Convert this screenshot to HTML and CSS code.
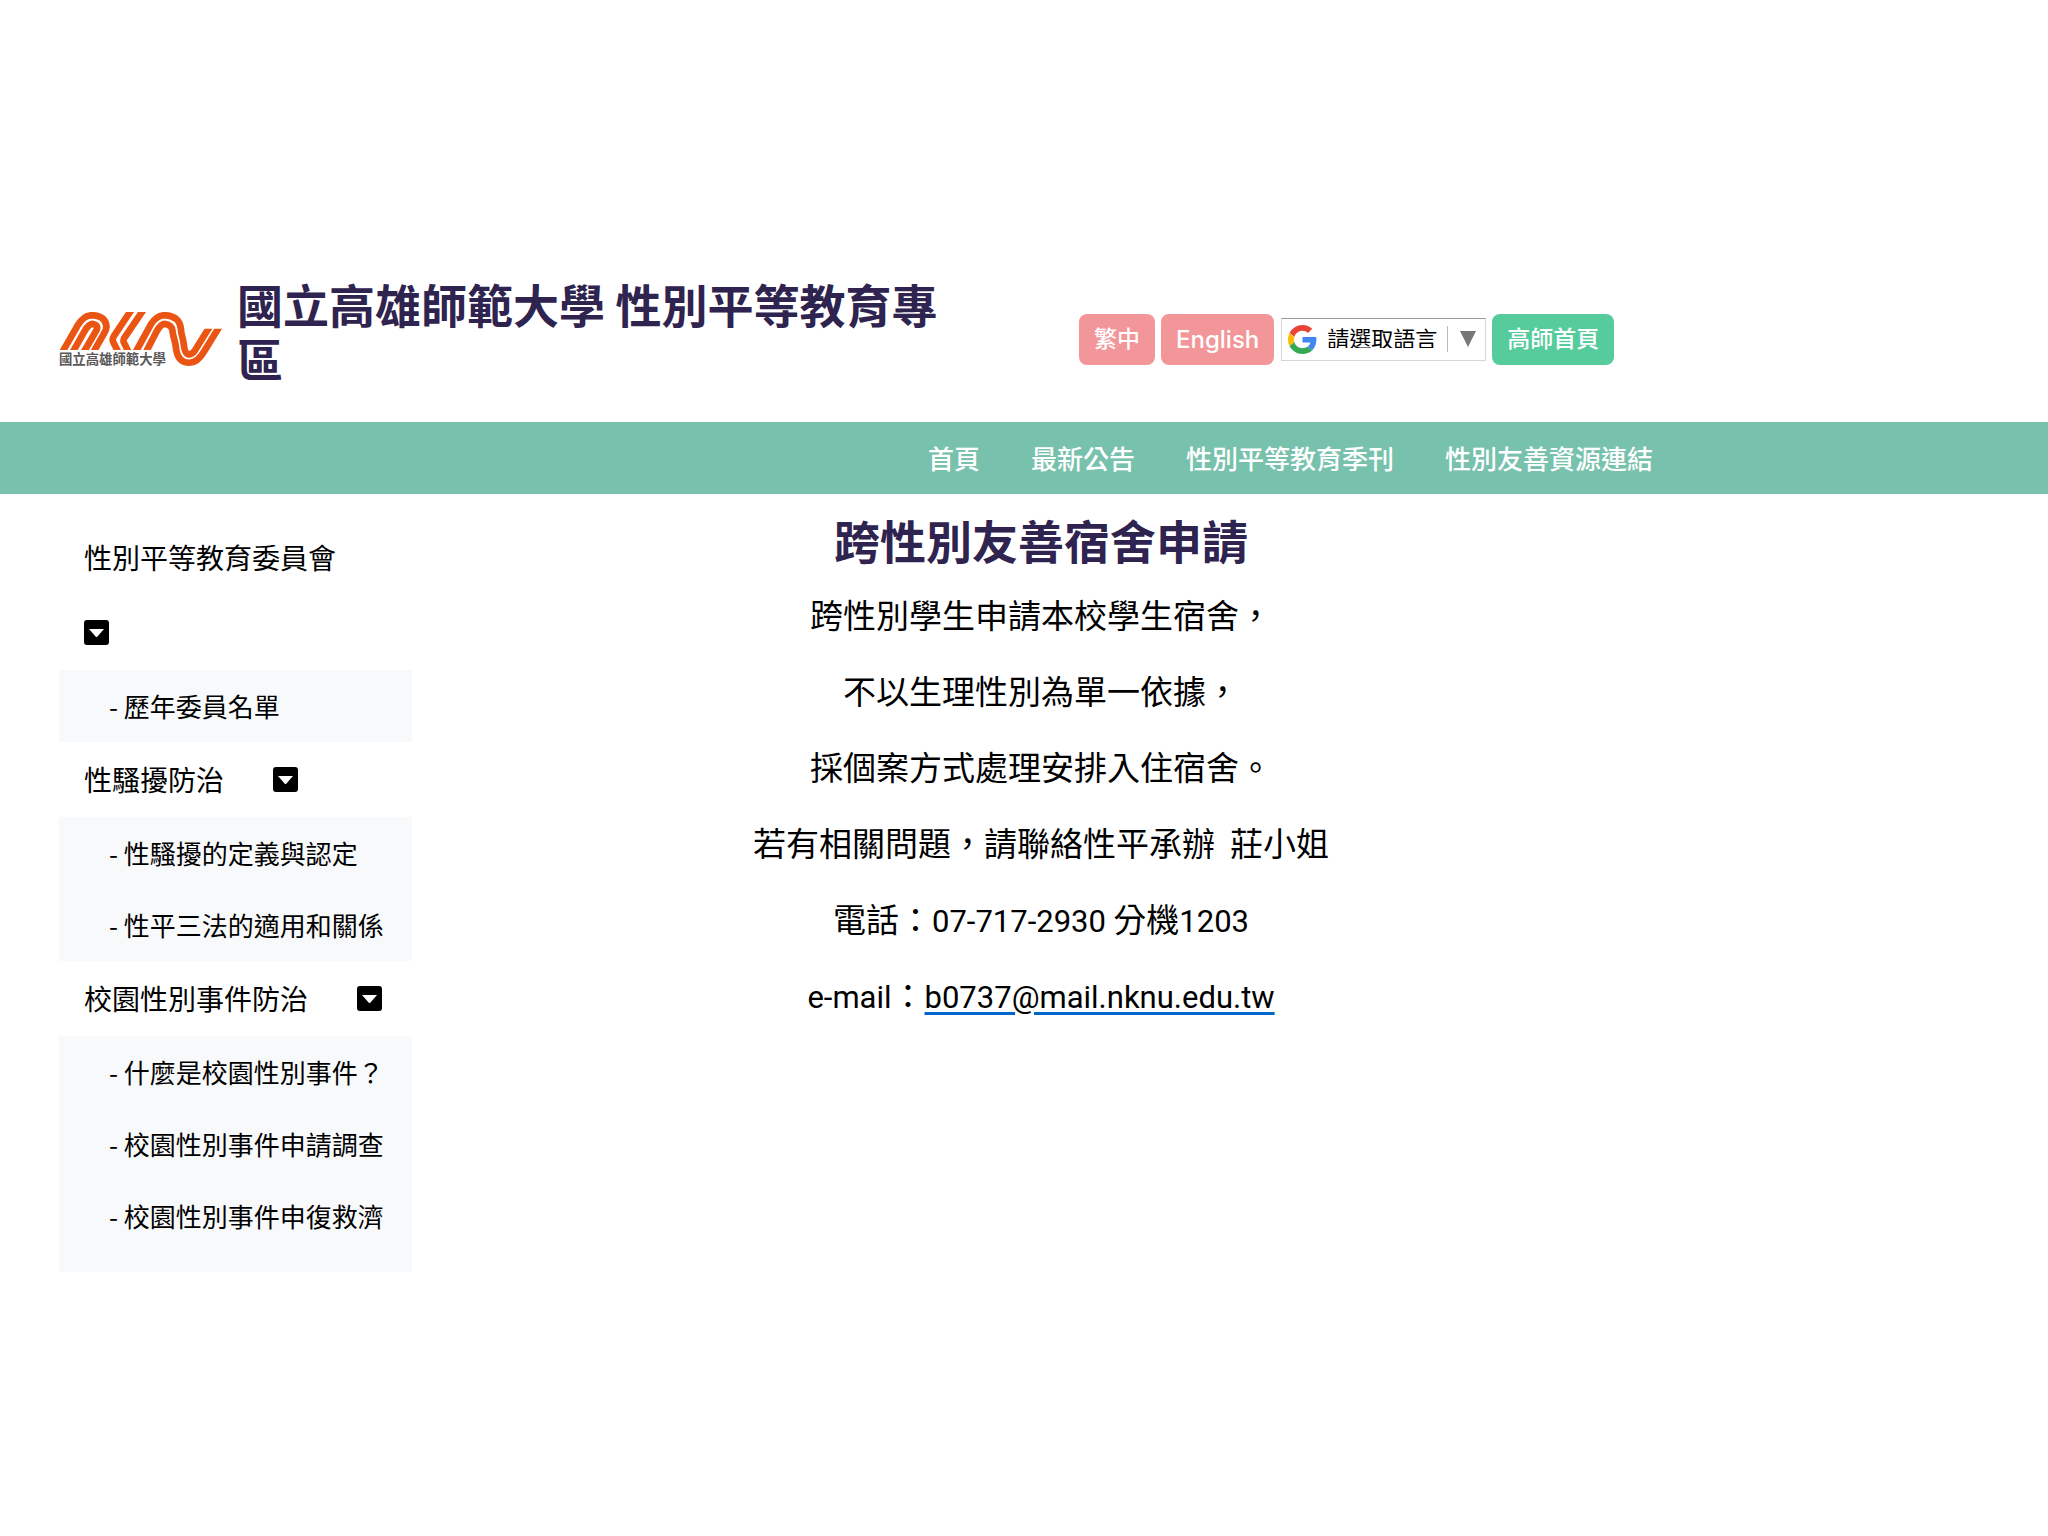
FILE: index.html
```html
<!DOCTYPE html>
<html lang="zh-Hant">
<head>
<meta charset="utf-8">
<title>跨性別友善宿舍申請</title>
<link rel="stylesheet" href="styles.css">
</head>
<body>
<header class="header">
  <a class="logo" href="#" aria-label="NKNU">
    <svg class="logo-mark" viewBox="56 64 496 166" aria-hidden="true">
      <defs><clipPath id="legs"><path d="M50 66H440V116H560V240H384V180H50Z"/></clipPath></defs>
      <g fill="none" stroke="#ea5514" stroke-width="20" clip-path="url(#legs)">
        <path d="M66 186 L112 106 Q130 76 156 76 Q195 78 198 110 Q197 120 191 130 L159 186"/>
        <path d="M97 186 L132 124 Q145 102 157 102 Q175 105 168 121 L130 186"/>
        <path d="M275 56 L219 140 Q214 148 219 158 L233 186"/>
        <path d="M311 56 L251 144 Q247 151 250 158 L264 186"/>
        <path d="M285 186 L330 104 Q347 76 373 76 Q416 79 420 116 C421 135 429 150 430 172 Q434 194 446 193 Q455 192 463 180 L514 98"/>
        <path d="M316 186 L348 124 Q360 102 373 102 Q393 105 395 122 C396 140 405 155 406 178 Q412 218 446 218 Q470 217 489 185 L543 98"/>
      </g>
      <text class="logo-text" x="56" y="223">國立高雄師範大學</text>
    </svg>
  </a>
  <h1 class="site-title">國立高雄師範大學 性別平等教育專區</h1>
  <div class="tools">
    <a class="button pink" href="#">繁中</a>
    <a class="button pink" href="#" lang="en">English</a>
    <label class="translate">
      <svg class="google" viewBox="0 0 48 48" aria-hidden="true">
        <path fill="#EA4335" d="M24 9.5c3.54 0 6.71 1.22 9.21 3.6l6.85-6.85C35.9 2.38 30.47 0 24 0 14.62 0 6.51 5.38 2.56 13.22l7.98 6.19C12.43 13.72 17.74 9.5 24 9.5z"/>
        <path fill="#4285F4" d="M46.98 24.55c0-1.57-.15-3.09-.38-4.55H24v9.02h12.94c-.58 2.96-2.26 5.48-4.78 7.18l7.73 6c4.51-4.18 7.09-10.36 7.09-17.65z"/>
        <path fill="#FBBC05" d="M10.53 28.59c-.48-1.45-.76-2.99-.76-4.59s.27-3.14.76-4.59l-7.98-6.19C.92 16.46 0 20.12 0 24c0 3.88.92 7.54 2.56 10.78l7.97-6.19z"/>
        <path fill="#34A853" d="M24 48c6.48 0 11.93-2.13 15.89-5.81l-7.73-6c-2.15 1.45-4.92 2.3-8.16 2.3-6.26 0-11.57-4.22-13.47-9.91l-7.98 6.19C6.51 42.62 14.62 48 24 48z"/>
      </svg>
      <select class="language" aria-label="請選取語言"><option>請選取語言</option></select>
      <svg class="arrow" viewBox="0 0 16 16" aria-hidden="true"><path d="M0 0H16L8 16Z" fill="#777"/></svg>
    </label>
    <a class="button green" href="#">高師首頁</a>
  </div>
</header>
<nav class="nav">
  <a href="#">首頁</a>
  <a href="#">最新公告</a>
  <a href="#">性別平等教育季刊</a>
  <a href="#">性別友善資源連結</a>
</nav>
<div class="layout">
  <aside class="sidebar">
    <a class="group" href="#">性別平等教育委員會
      <svg class="caret" viewBox="0 0 25 25" aria-hidden="true"><path fill-rule="evenodd" d="M3 0H22A3 3 0 0 1 25 3V22A3 3 0 0 1 22 25H3A3 3 0 0 1 0 22V3A3 3 0 0 1 3 0ZM5 9L12 17H13L20 9Z"/></svg></a>
    <ul class="sub"><li><a href="#">- 歷年委員名單</a></li></ul>
    <a class="group" href="#">性騷擾防治
      <svg class="caret" viewBox="0 0 25 25" aria-hidden="true"><path fill-rule="evenodd" d="M3 0H22A3 3 0 0 1 25 3V22A3 3 0 0 1 22 25H3A3 3 0 0 1 0 22V3A3 3 0 0 1 3 0ZM5 9L12 17H13L20 9Z"/></svg></a>
    <ul class="sub">
      <li><a href="#">- 性騷擾的定義與認定</a></li>
      <li><a href="#">- 性平三法的適用和關係</a></li>
    </ul>
    <a class="group" href="#">校園性別事件防治
      <svg class="caret" viewBox="0 0 25 25" aria-hidden="true"><path fill-rule="evenodd" d="M3 0H22A3 3 0 0 1 25 3V22A3 3 0 0 1 22 25H3A3 3 0 0 1 0 22V3A3 3 0 0 1 3 0ZM5 9L12 17H13L20 9Z"/></svg></a>
    <ul class="sub last">
      <li><a href="#">- 什麼是校園性別事件？</a></li>
      <li><a href="#">- 校園性別事件申請調查</a></li>
      <li><a href="#">- 校園性別事件申復救濟</a></li>
    </ul>
  </aside>
  <main class="content">
    <h2>跨性別友善宿舍申請</h2>
    <p>跨性別學生申請本校學生宿舍，</p>
    <p>不以生理性別為單一依據，</p>
    <p>採個案方式處理安排入住宿舍。</p>
    <p>若有相關問題，請聯絡性平承辦&nbsp; 莊小姐</p>
    <p>電話：<span class="latin">07-717-2930</span> 分機<span class="latin">1203</span></p>
    <p><span class="latin">e-mail</span>：<a class="mail latin" href="mailto:b0737@mail.nknu.edu.tw">b0737@mail.nknu.edu.tw</a></p>
  </main>
</div>
</body>
</html>
```
FILE: styles.css
```css
* { box-sizing: border-box; }
body {
  margin: 0;
  padding-top: 250px;
  background: #fff;
  color: #000;
  font-family: "Noto Sans CJK TC", sans-serif;
}
a { color: inherit; text-decoration: none; }
h1, h2, p, ul { margin: 0; padding: 0; }
ul { list-style: none; }

.header {
  display: flex;
  align-items: center;
  min-height: 172px;
  padding: 0 20px 0 59px;
}
.logo { flex: none; margin-right: 12px; padding-top: 6px; }
.logo-mark { display: block; width: 166px; height: 56px; }
.logo-text { font-size: 40px; font-weight: 700; fill: #595757; }
.site-title {
  flex: 0 0 720px;
  padding-bottom: 12px;
  color: #2f234f;
  font-size: 46px;
  line-height: 54px;
  font-weight: 700;
}
.tools { display: flex; align-items: center; gap: 6px; margin-left: 122px; padding-top: 6px; }
.button {
  padding: 0 15px;
  border-radius: 8px;
  color: #fff;
  font-family: Inter, "Noto Sans CJK TC", sans-serif;
  font-size: 23px;
  font-weight: 500;
  line-height: 51px;
  white-space: nowrap;
}
.button:lang(en) { font-size: 24px; }
.pink { background: #f3969a; }
.green { background: #56cc9d; }
.translate {
  display: flex;
  align-items: center;
  height: 43px;
  margin-left: 1px;
  padding: 0 9px 0 6px;
  border: 1px solid #d5d5d5;
  border-top: 1px solid #9b9b9b;
}
.google { width: 29px; height: 29px; }
.language {
  appearance: none;
  height: 26px;
  margin-left: 10px;
  padding: 0 9px 4px 0;
  border: 0;
  border-right: 1px solid #bbb;
  background: none;
  color: #000;
  font: 22px/22px "Noto Sans CJK TC", sans-serif;
}
.arrow { width: 16px; height: 16px; margin-left: 12px; }

.nav {
  display: flex;
  justify-content: flex-end;
  gap: 51px;
  padding-right: 395px;
  background: #78c2ad;
  color: #fff;
  font-size: 26px;
  font-weight: 500;
  line-height: 72px;
}

.layout { display: flex; padding: 0 378px 0 59px; }
.sidebar { flex: 0 0 353px; padding-top: 26px; }
.group {
  display: flex;
  flex-wrap: wrap;
  align-items: center;
  column-gap: 49px;
  padding: 0 25px;
  font-size: 28px;
  line-height: 75px;
}
.caret { width: 25px; height: 75px; }
.sub { padding-left: 50px; background: #f8f9fb; font-size: 26px; line-height: 72px; white-space: nowrap; }
.last { padding-bottom: 20px; }

.content { flex: 1; padding-top: 16px; text-align: center; }
.content h2 { margin-bottom: 8px; color: #2f234f; font-size: 46px; line-height: 58px; font-weight: 700; }
.content p { font-size: 33px; line-height: 76px; }
.latin { font-family: Roboto, sans-serif; font-size: 31px; line-height: 31px; }
.mail { text-decoration: underline #0066cc 3px; text-underline-offset: 4px; }
```
